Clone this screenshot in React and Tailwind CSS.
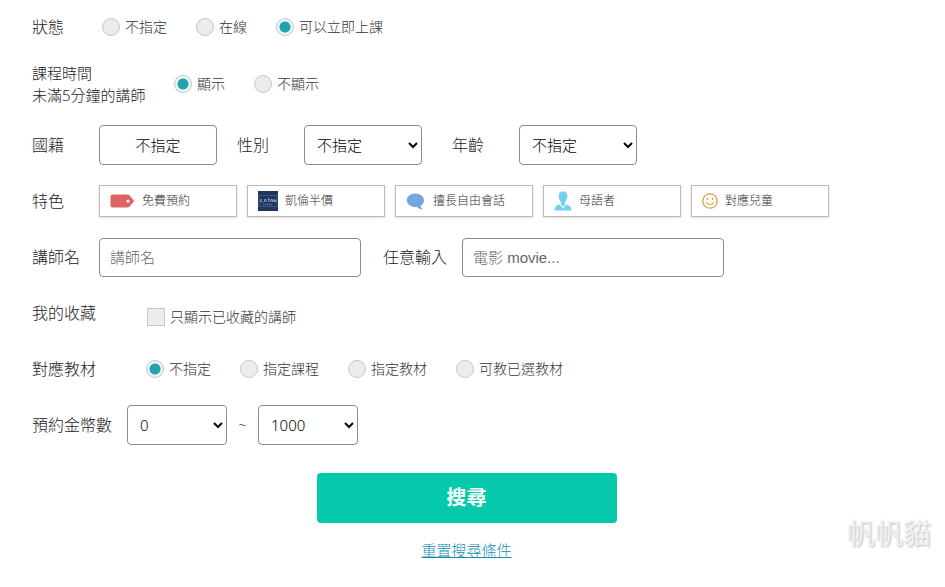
import { useState } from "react";

const TagIcon = () => (
  <svg width="25" height="14" viewBox="0 0 25 14" aria-hidden="true">
    <path d="M2.5 0.5H17.5Q18.6 0.5 19.4 1.3L24.2 7L19.4 12.7Q18.6 13.5 17.5 13.5H2.5Q0.5 13.5 0.5 11.5V2.5Q0.5 0.5 2.5 0.5Z" fill="#dc6464" />
    <circle cx="18" cy="7" r="1.6" fill="#fff" />
  </svg>
);

const CampaignIcon = () => (
  <svg width="20" height="20" viewBox="0 0 20 20" aria-hidden="true">
    <rect width="20" height="20" fill="#1e3560" />
    <rect x="1" y="4.5" width="18" height="11" fill="none" stroke="#4a6593" strokeWidth="0.7" />
    <path d="M4 8.5q-2 0-1.6 1.6t1.8.6M6 11l1.2-3 1.2 3M9.6 8h2.4M10.8 8v3M12.6 11l1.2-3 1.2 3M16 11V8.5l1.8 2.5V8.5" fill="none" stroke="#b5c4de" strokeWidth="0.8" />
    <path d="M5 13.3h10" stroke="#7f95ba" strokeWidth="0.8" strokeDasharray="1.4 0.5" />
  </svg>
);

const BubbleIcon = () => (
  <svg width="20" height="18" viewBox="0 0 20 18" aria-hidden="true">
    <path d="M9.500 1.500C14.400 1.500 18 4.500 18 8.300C18 10.700 16.700 12.700 14.700 13.900C14.900 15.300 15.700 16.400 17 17.300C14.600 17.500 12.400 16.600 11.200 15C5 15.600 0.800 12.400 0.800 8.300C0.800 4.500 4.600 1.500 9.500 1.500Z" fill="#74a7e2" />
  </svg>
);

const PersonIcon = () => (
  <svg width="18" height="20" viewBox="0 0 18 20" aria-hidden="true">
    <path d="M9 0.500C11.800 0.500 13.600 2.500 13.400 5.300C13.300 7.700 12.200 9.800 11.100 10.900V13L9 16L6.900 13V10.900C5.800 9.800 4.700 7.700 4.600 5.300C4.400 2.500 6.200 0.500 9 0.500Z" fill="#70d2ec" />
    <path d="M6 13.500L9 18L12 13.500C15.500 14.300 17.500 15.800 17.500 19.500H0.500C0.500 15.800 2.500 14.300 6 13.500Z" fill="#70d2ec" />
  </svg>
);

const SmileIcon = () => (
  <svg width="16" height="16" viewBox="0 0 16 16" fill="none" stroke="#d5a344" aria-hidden="true">
    <circle cx="8" cy="8" r="7.2" strokeWidth="1.3" />
    <path d="M4.300 9.300C5.500 12.200 10.500 12.200 11.700 9.300" strokeWidth="1.100" />
    <path d="M5.500 4.800V7M10.500 4.800V7" strokeWidth="1.300" />
  </svg>
);

const FEATURES = [
  { id: "free", label: "免費預約", Icon: TagIcon },
  { id: "half", label: "凱倫半價", Icon: CampaignIcon },
  { id: "talk", label: "擅長自由會話", Icon: BubbleIcon },
  { id: "native", label: "母語者", Icon: PersonIcon },
  { id: "kids", label: "對應兒童", Icon: SmileIcon },
];

const labelClass = "shrink-0 text-base text-[#222]";
const selectClass =
  "h-10 rounded border border-[#8c8c8c] bg-white pl-2 text-[15px] text-black";
const inputClass =
  "h-[39px] w-[262px] rounded border border-[#8c8c8c] bg-white px-2.5 font-['Liberation_Sans','Noto_Sans_CJK_TC',sans-serif] text-[15px] font-light text-black placeholder:text-[#666]";

function RadioGroup({ name, label, options, value, onChange, className }) {
  return (
    <div role="radiogroup" aria-label={label} className={`flex items-center ${className}`}>
      {options.map((option) => (
        <label key={option} className="flex items-center gap-[5px] text-sm text-[#333]">
          <input
            type="radio"
            name={name}
            checked={value === option}
            onChange={() => onChange(option)}
            className="size-[18px] appearance-none rounded-full border border-[#c8c8c8] bg-[#ececec] checked:bg-[radial-gradient(circle,#22a2ab_5px,#eaf6f7_6px)]"
          />
          {option}
        </label>
      ))}
    </div>
  );
}

export default function App() {
  const [status, setStatus] = useState("可以立即上課");
  const [shortTime, setShortTime] = useState("顯示");
  const [material, setMaterial] = useState("不指定");
  const [features, setFeatures] = useState([]);

  const toggleFeature = (id) => {
    setFeatures((prev) =>
      prev.includes(id) ? prev.filter((f) => f !== id) : [...prev, id]
    );
  };

  return (
    <div className="relative bg-white font-['Noto_Sans','Noto_Sans_CJK_TC',sans-serif] font-light">
      <form onSubmit={(e) => e.preventDefault()}>
        <div className="flex min-h-[54px] items-center pl-8">
          <span className={`${labelClass} w-[70px]`}>狀態</span>
          <RadioGroup
            name="status"
            label="狀態"
            options={["不指定", "在線", "可以立即上課"]}
            value={status}
            onChange={setStatus}
            className="gap-[29px]"
          />
        </div>

        <div className="flex min-h-[63px] items-center pb-1 pl-8">
          <span className="w-[142px] shrink-0 text-[15px] leading-[22px] text-[#222]">
            課程時間
            <br />
            未滿5分鐘的講師
          </span>
          <RadioGroup
            name="shortTime"
            label="課程時間未滿5分鐘的講師"
            options={["顯示", "不顯示"]}
            value={shortTime}
            onChange={setShortTime}
            className="gap-[29px]"
          />
        </div>

        <div className="flex min-h-14 items-center pl-8">
          <label htmlFor="country" className={`${labelClass} w-[67px]`}>國籍</label>
          <button id="country" type="button" className="h-10 w-[118px] rounded border border-[#8c8c8c] text-[15px] text-black">
            不指定
          </button>
          <label htmlFor="gender" className={`${labelClass} ml-5 w-[67px]`}>性別</label>
          <select id="gender" className={`${selectClass} w-[118px]`}>
            <option>不指定</option>
            <option>男</option>
            <option>女</option>
          </select>
          <label htmlFor="age" className={`${labelClass} ml-[30px] w-[67px]`}>年齡</label>
          <select id="age" className={`${selectClass} w-[118px]`}>
            <option>不指定</option>
            <option>20~29</option>
            <option>30~39</option>
          </select>
        </div>

        <div className="flex min-h-14 items-center pl-8">
          <span className={`${labelClass} w-[67px]`}>特色</span>
          <div className="flex gap-2.5">
            {FEATURES.map(({ id, label, Icon }) => (
              <button
                key={id}
                type="button"
                aria-pressed={features.includes(id)}
                onClick={() => toggleFeature(id)}
                className="flex h-8 w-[138px] items-center gap-[7px] border border-[#bbb] pl-2.5 text-xs text-[#333] shadow-sm aria-pressed:bg-teal-50"
              >
                <Icon />
                {label}
              </button>
            ))}
          </div>
        </div>

        <div className="flex min-h-14 items-center pl-8">
          <label htmlFor="teacher" className={`${labelClass} w-[67px]`}>講師名</label>
          <input id="teacher" type="text" placeholder="講師名" className={inputClass} />
          <label htmlFor="keyword" className={`${labelClass} ml-[22px] w-[79px]`}>任意輸入</label>
          <input id="keyword" type="text" placeholder="電影 movie..." className={inputClass} />
        </div>

        <div className="flex min-h-14 items-center pl-8">
          <span className={`${labelClass} w-[115px]`}>我的收藏</span>
          <label className="flex items-center gap-[5px] pt-2 text-sm text-[#333]">
            <input type="checkbox" className="size-[18px] appearance-none border border-[#c8c8c8] bg-[#ececec] checked:bg-[#22a2ab]" />
            只顯示已收藏的講師
          </label>
        </div>

        <div className="flex min-h-14 items-center pl-8">
          <span className={`${labelClass} w-[114px]`}>對應教材</span>
          <RadioGroup
            name="material"
            label="對應教材"
            options={["不指定", "指定課程", "指定教材", "可教已選教材"]}
            value={material}
            onChange={setMaterial}
            className="gap-[29px]"
          />
        </div>

        <div className="flex min-h-14 items-center pl-8">
          <label htmlFor="coinMin" className={`${labelClass} w-[95px]`}>預約金幣數</label>
          <select id="coinMin" className={`${selectClass} w-[100px]`}>
            <option>0</option>
            <option>100</option>
          </select>
          <span className="w-[31px] text-center text-sm text-[#222]">~</span>
          <select id="coinMax" aria-label="預約金幣數上限" defaultValue="1000" className={`${selectClass} w-[100px]`}>
            <option>500</option>
            <option>1000</option>
          </select>
        </div>

        <div className="flex flex-col items-center gap-4 pt-5 pr-3">
          <button type="submit" className="h-[50px] w-[300px] rounded bg-[#05c9aa] text-xl font-bold text-white">
            搜尋
          </button>
          <a href="#reset" className="text-[15px] text-[#1690b2] underline">
            重置搜尋條件
          </a>
        </div>
      </form>

      <span className="absolute right-3.5 bottom-2 text-[28px] font-normal text-[#f0f0f0] [text-shadow:1px_1px_2px_#bbb]">
        帆帆貓
      </span>
    </div>
  );
}
